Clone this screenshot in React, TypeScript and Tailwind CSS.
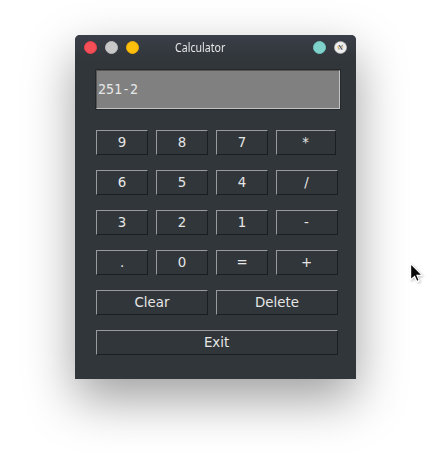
import { ReactNode } from 'react';

type KeyProps = { children: ReactNode; width?: string };

function Key({ children, width = 'w-[52px]' }: KeyProps) {
  return (
    <button
      className={`${width} h-[25px] shrink-0 border border-t-[#989a9b] border-l-[#989a9b] border-r-[#1b1e20] border-b-[#1b1e20] text-center text-[13.33px] leading-[23px] text-[#e6e6e6]`}
    >
      {children}
    </button>
  );
}

const rows = [
  ['9', '8', '7', '*'],
  ['6', '5', '4', '/'],
  ['3', '2', '1', '-'],
  ['.', '0', '=', '+'],
];

function TitleBar() {
  return (
    <header className="flex h-[25px] items-center rounded-t-[5px] bg-linear-to-b from-[#3a3e48] to-[#31363a] pl-[9px] pr-[9px]">
      <div className="flex gap-2">
        <span className="size-[13px] rounded-full border border-[#e5424b] bg-[#f64f58]" />
        <span className="size-[13px] rounded-full border border-[#bdbdbd] bg-[#c8c8c8]" />
        <span className="size-[13px] rounded-full border border-[#edae09] bg-[#ffbf0b]" />
      </div>
      <h1 className="ml-9 w-[50px] origin-left scale-x-[0.885] whitespace-nowrap font-['Noto_Sans','Open_Sans',sans-serif] text-[12px] leading-[25px] text-[#e6e6e6]">
        Calculator
      </h1>
      <div className="ml-auto flex items-center gap-2">
        <span className="size-[13px] rounded-full border border-[#70c8c0] bg-[#7ed2ca]" />
        <svg width="13" height="13" viewBox="0 0 13 13">
          <circle cx="6.5" cy="6.5" r="6.1" fill="#eeeeee" stroke="#b5b5b5" strokeWidth=".6" />
          <path d="M4.4 4.3 5.7 4 8.9 8.6 7.5 8.8Z" fill="#50555a" />
          <path d="M8.8 3.8 7.4 5.6" stroke="#68727c" strokeWidth="1" />
          <path d="M4 5 4.6 8" stroke="#e8b55c" strokeWidth="1.3" />
          <path d="M5.9 7.3 4.7 8.9" stroke="#849fb8" strokeWidth="1" />
          <path d="M8.5 5 8.9 6.9" stroke="#e0c288" strokeWidth="1.1" />
        </svg>
      </div>
    </header>
  );
}

export default function App() {
  return (
    <main className="relative h-[464px] w-[431px] overflow-hidden bg-white pl-[75px] pt-[35px] font-['DejaVu_Sans',sans-serif]">
      <section className="h-[344px] w-[281px] rounded-t-[5px] bg-[#31363a] shadow-[0_20px_50px_rgba(0,0,0,0.38)]">
        <TitleBar />
        <div className="pl-5 pt-[9px]">
          <div className="h-[41px] w-[246px] border border-[#25282a]">
            <div className="h-full border border-t-[#555555] border-l-[#555555] border-r-[#c3c3c3] border-b-[#c3c3c3] bg-[#808080] pl-px font-['DejaVu_Sans_Mono',monospace] text-[13.33px] leading-[37px] text-[#e6e6e6]">
              251-2
            </div>
          </div>
        </div>
        <div className="flex flex-col gap-[15px] pl-[21px] pt-5">
          {rows.map((row) => (
            <div key={row[0]} className="flex gap-2">
              {row.map((label, i) => (
                <Key
                  key={label}
                  width={i < 3 ? 'w-[52px]' : label === '*' ? 'w-[60px] pr-px' : 'w-[62px] pr-px'}
                >
                  {label}
                </Key>
              ))}
            </div>
          ))}
          <div className="flex gap-2">
            <Key width="w-[112px]">Clear</Key>
            <Key width="w-[122px]">Delete</Key>
          </div>
          <Key width="w-[242px] pr-px">Exit</Key>
        </div>
      </section>
      <svg
        className="absolute left-[409px] top-[262px] drop-shadow-[1px_1px_1px_rgba(0,0,0,0.25)]"
        width="16"
        height="23"
        viewBox="0 0 16 23"
      >
        <path
          d="M1.6 1.6V18.2L5.5 14.8L8.3 20.2L10.4 19.2L8 13.6H13.2Z"
          fill="#ffffff"
          stroke="#ffffff"
          strokeWidth="1"
        />
        <path d="M2.2 3V16.6L5.8 13.4L8.2 18.7L9.4 18.1L7.1 12.7H11.9Z" fill="#080808" />
      </svg>
    </main>
  );
}
